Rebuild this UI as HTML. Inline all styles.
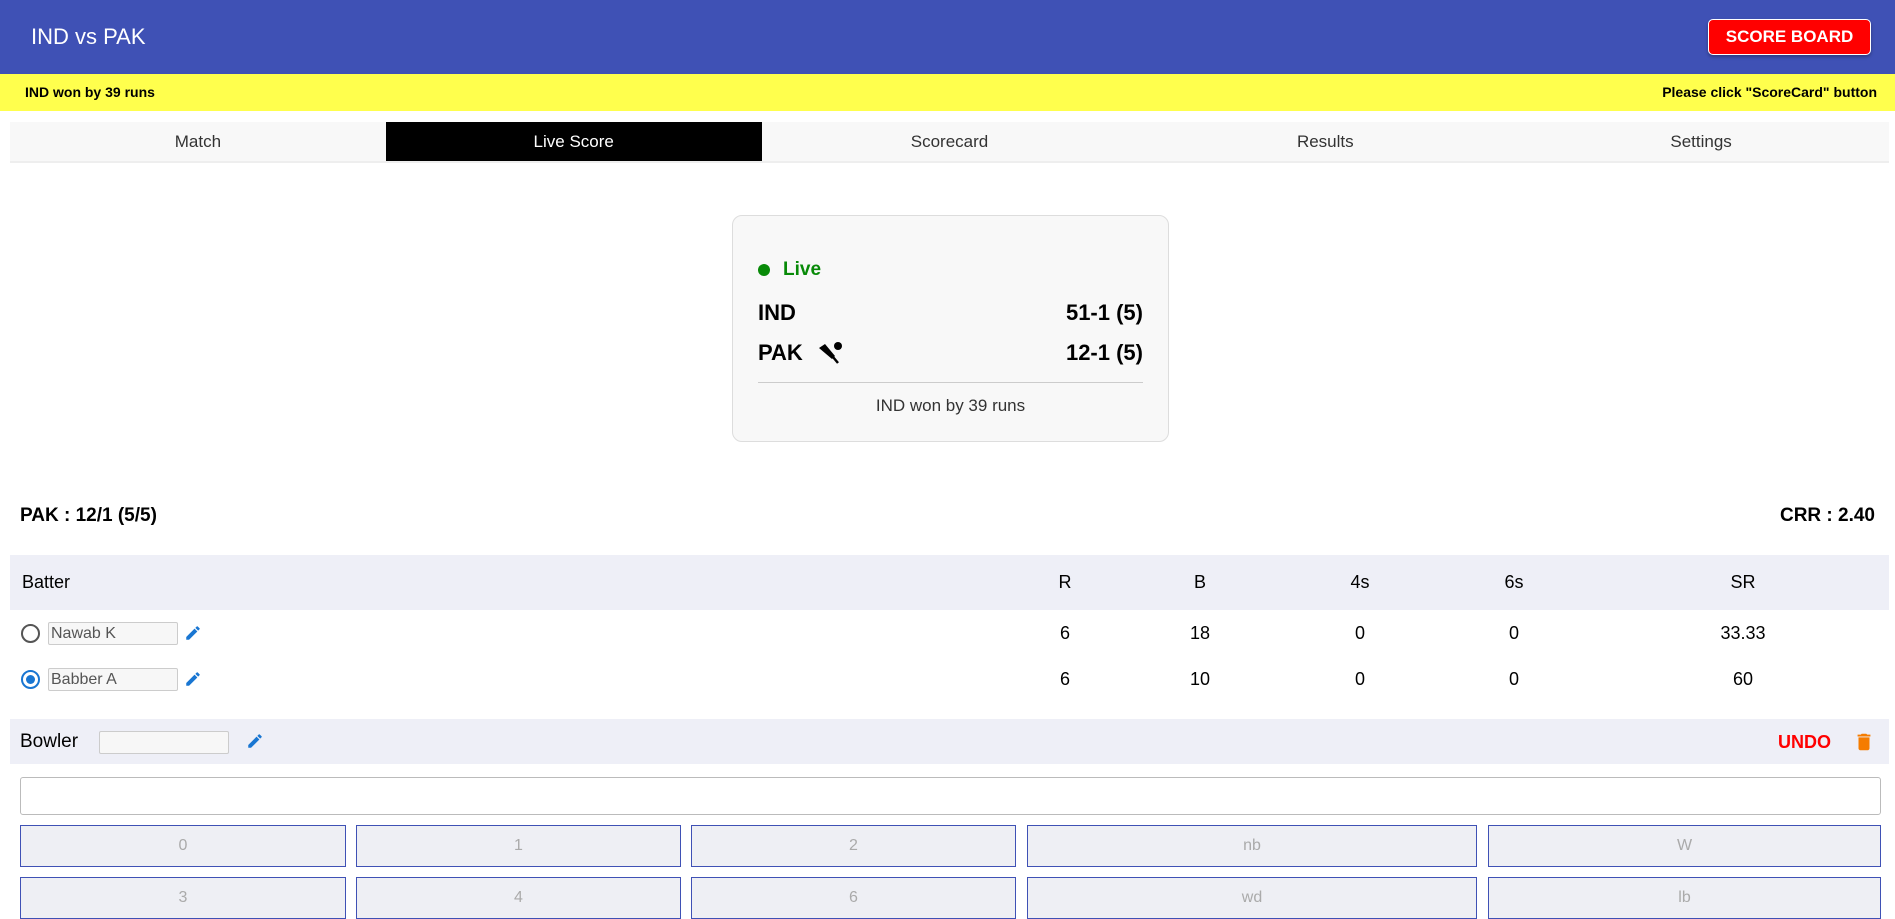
<!DOCTYPE html>
<html><head><meta charset="utf-8"><style>
*{box-sizing:border-box;margin:0;padding:0}
body{width:1895px;height:916px;overflow:hidden;background:#fff;font-family:"Liberation Sans",Arial,sans-serif;position:relative;color:#000}
.a{position:absolute}
.hdr{left:0;top:0;width:1895px;height:74px;background:#3f51b5}
.ttl{left:31px;top:24px;color:#fff;font-size:22px}
.sb{left:1708px;top:19px;width:163px;height:36px;background:#f00;border:1px solid #fff;border-radius:5px;color:#fff;font-weight:bold;font-size:17px;text-align:center;line-height:34px;box-shadow:0 2px 3px rgba(0,0,0,.3)}
.yel{left:0;top:74px;width:1895px;height:37px;background:#ffff4d;font-size:14px;line-height:37px;font-weight:bold}
.tabs{left:10px;top:122px;width:1879px;height:41px;background:#f8f8f8;border-bottom:2px solid #eee;display:flex}
.tabs div{flex:1;text-align:center;line-height:40px;font-size:17px;color:#333}
.tabs .on{background:#000;color:#fff}
.card{left:732px;top:215px;width:437px;height:227px;background:#f8f8f8;border:1px solid #ddd;border-radius:10px}
.b{font-weight:bold}
.band{left:10px;width:1879px;background:#eeeff7}
.c{text-align:center;width:80px;font-size:18px}
.inp{border:1px solid #ccc;background:#f7f7f7;border-radius:2px;height:23px;font-size:16px;color:#555;padding-left:2px;line-height:21px}
.btn{border:1.5px solid #3f51b5;background:#eeeff4;color:#aaa;font-size:16px;text-align:center;line-height:40px;height:42px}
</style></head><body>
<div class="a hdr"></div>
<div class="a ttl">IND vs PAK</div>
<div class="a sb">SCORE BOARD</div>
<div class="a yel"><span class="a" style="left:25px">IND won by 39 runs</span><span class="a" style="right:18px">Please click "ScoreCard" button</span></div>
<div class="a tabs"><div>Match</div><div class="on">Live Score</div><div>Scorecard</div><div>Results</div><div>Settings</div></div>

<div class="a card"></div>
<div class="a" style="left:758px;top:264px;width:12px;height:12px;border-radius:50%;background:#088a08"></div>
<div class="a b" style="left:783px;top:259px;font-size:19px;color:#088a08">Live</div>
<div class="a b" style="left:758px;top:300px;font-size:22px">IND</div>
<div class="a b" style="right:752px;top:300px;font-size:22px">51-1 (5)</div>
<div class="a b" style="left:758px;top:340px;font-size:22px">PAK</div>
<svg class="a" style="left:816px;top:341px" width="28" height="26" viewBox="0 0 28 26"><path d="M3 7 L9 3 L19 15 L16 18 Z" fill="#000"/><path d="M17 16 L22 22" stroke="#000" stroke-width="2.5"/><circle cx="22" cy="5" r="4" fill="#000"/></svg>
<div class="a b" style="right:752px;top:340px;font-size:22px">12-1 (5)</div>
<div class="a" style="left:758px;top:382px;width:385px;height:1px;background:#ccc"></div>
<div class="a" style="left:732px;top:396px;width:437px;text-align:center;font-size:17px;color:#333">IND won by 39 runs</div>

<div class="a b" style="left:20px;top:505px;font-size:19px">PAK : 12/1 (5/5)</div>
<div class="a b" style="right:20px;top:505px;font-size:19px">CRR : 2.40</div>

<div class="a band" style="top:555px;height:55px"></div>
<div class="a" style="left:22px;top:572px;font-size:18px">Batter</div>
<div class="a c" style="left:1025px;top:572px">R</div>
<div class="a c" style="left:1160px;top:572px">B</div>
<div class="a c" style="left:1320px;top:572px">4s</div>
<div class="a c" style="left:1474px;top:572px">6s</div>
<div class="a c" style="left:1703px;top:572px">SR</div>

<div class="a" style="left:21px;top:624px;width:19px;height:19px;border:2px solid #555;border-radius:50%"></div>
<div class="a inp" style="left:48px;top:622px;width:130px">Nawab K</div>
<svg class="a" style="left:184px;top:624px" width="18" height="18" viewBox="0 0 24 24"><path d="M3 17.25V21h3.75L17.81 9.94l-3.75-3.75L3 17.25zM20.71 7.04a1 1 0 000-1.41l-2.34-2.34a1 1 0 00-1.41 0l-1.83 1.83 3.75 3.75 1.83-1.830z" fill="#1976d2"/></svg>
<div class="a c" style="left:1025px;top:623px">6</div>
<div class="a c" style="left:1160px;top:623px">18</div>
<div class="a c" style="left:1320px;top:623px">0</div>
<div class="a c" style="left:1474px;top:623px">0</div>
<div class="a c" style="left:1703px;top:623px">33.33</div>

<div class="a" style="left:21px;top:670px;width:19px;height:19px;border:2px solid #1976d2;border-radius:50%"><div style="margin:3px;width:9px;height:9px;border-radius:50%;background:#1976d2"></div></div>
<div class="a inp" style="left:48px;top:668px;width:130px">Babber A</div>
<svg class="a" style="left:184px;top:670px" width="18" height="18" viewBox="0 0 24 24"><path d="M3 17.25V21h3.75L17.81 9.94l-3.75-3.75L3 17.25zM20.71 7.04a1 1 0 000-1.41l-2.34-2.34a1 1 0 00-1.41 0l-1.83 1.83 3.75 3.75 1.83-1.83z" fill="#1976d2"/></svg>
<div class="a c" style="left:1025px;top:669px">6</div>
<div class="a c" style="left:1160px;top:669px">10</div>
<div class="a c" style="left:1320px;top:669px">0</div>
<div class="a c" style="left:1474px;top:669px">0</div>
<div class="a c" style="left:1703px;top:669px">60</div>

<div class="a band" style="top:719px;height:45px"></div>
<div class="a" style="left:20px;top:731px;font-size:19px">Bowler</div>
<div class="a inp" style="left:99px;top:731px;width:130px"></div>
<svg class="a" style="left:246px;top:732px" width="18" height="18" viewBox="0 0 24 24"><path d="M3 17.25V21h3.75L17.81 9.94l-3.75-3.75L3 17.25zM20.71 7.04a1 1 0 000-1.41l-2.34-2.34a1 1 0 00-1.41 0l-1.83 1.83 3.75 3.75 1.83-1.83z" fill="#1976d2"/></svg>
<div class="a b" style="left:1778px;top:732px;font-size:18px;color:#f00">UNDO</div>
<svg class="a" style="left:1853px;top:730px" width="22" height="24" viewBox="0 0 24 24"><path d="M6 19c0 1.1.9 2 2 2h8c1.1 0 2-.9 2-2V7H6v12zM19 4h-3.5l-1-1h-5l-1 1H5v2h14V4z" fill="#f57c00"/></svg>

<div class="a" style="left:20px;top:777px;width:1861px;height:38px;border:1px solid #bbb;border-radius:3px"></div>
<div class="a btn" style="left:20px;top:825px;width:326px">0</div>
<div class="a btn" style="left:356px;top:825px;width:325px">1</div>
<div class="a btn" style="left:691px;top:825px;width:325px">2</div>
<div class="a btn" style="left:1027px;top:825px;width:450px">nb</div>
<div class="a btn" style="left:1488px;top:825px;width:393px">W</div>
<div class="a btn" style="left:20px;top:877px;width:326px">3</div>
<div class="a btn" style="left:356px;top:877px;width:325px">4</div>
<div class="a btn" style="left:691px;top:877px;width:325px">6</div>
<div class="a btn" style="left:1027px;top:877px;width:450px">wd</div>
<div class="a btn" style="left:1488px;top:877px;width:393px">lb</div>
</body></html>
